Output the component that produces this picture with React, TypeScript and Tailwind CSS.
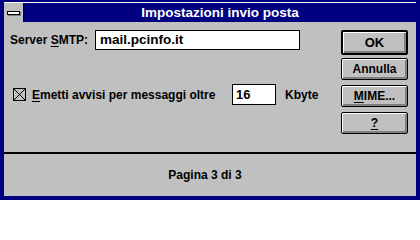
const font = { fontFamily: '"Liberation Sans", Arial, sans-serif' }

const Button = ({ children, isDefault = false, className = '' }: { children: React.ReactNode; isDefault?: boolean; className?: string }) => (
  <div
    className={`flex items-center justify-center bg-[#c0c0c0] rounded-[2px] text-[12px] font-bold text-black ${
      isDefault ? 'border-2 border-black' : 'border border-black'
    } shadow-[inset_1px_1px_0_#ffffff,inset_-2px_-2px_0_#808080] ${className}`}
  >
    {children}
  </div>
)

const CheckBox = () => (
  <svg width="13" height="13" viewBox="0 0 13 13" className="shrink-0">
    <rect x="0.5" y="0.5" width="12" height="12" fill="#c0c0c0" stroke="#000" />
    <path d="M1 1 L12 12 M12 1 L1 12" stroke="#000" strokeWidth="1" />
  </svg>
)

export default function App() {
  return (
    <div style={font} className="w-[420px] h-[200px] bg-[#000080] flex flex-col pl-[4px] pr-[4px] pb-[4px] pt-[2px] select-none">
      {/* Title bar */}
      <div className="flex h-[20px] border-t border-white">
        <div className="w-[20px] h-[19px] bg-[#c0c0c0] border-r border-black flex items-center justify-center">
          <div className="w-[13px] h-[4px] bg-white border border-black shadow-[1px_1px_0_#808080]" />
        </div>
        <div className="flex-1 flex items-center justify-center text-white font-bold text-[13.5px] leading-none">
          Impostazioni invio posta
        </div>
      </div>

      {/* Body */}
      <div className="flex-1 bg-[#c0c0c0] flex flex-col">
        <div className="h-[130px] flex">
          {/* Left fields */}
          <div className="flex-1 pt-[8px] pl-[6px]">
            <div className="flex items-center h-[20px] text-[12px] font-bold text-black">
              <span className="w-[85px]">
                Server <span className="underline underline-offset-2">S</span>MTP:
              </span>
              <div className="w-[205px] h-[20px] bg-white border border-black flex items-center pl-[4px] text-[13.5px]">
                mail.pcinfo.it
              </div>
            </div>

            <div className="flex items-center h-[21px] mt-[34px] text-[12px] font-bold text-black">
              <div className="w-[222px] flex items-center pl-[3px] gap-[6px]">
                <CheckBox />
                <span>
                  <span className="underline underline-offset-2">E</span>metti avvisi per messaggi oltre
                </span>
              </div>
              <div className="w-[44px] h-[21px] bg-white border border-black flex items-center pl-[3px] text-[13px]">
                16
              </div>
              <span className="ml-[9px]">Kbyte</span>
            </div>
          </div>

          {/* Buttons */}
          <div className="w-[67px] mr-[8px] pt-[8px] flex flex-col">
            <Button isDefault className="h-[25px] text-[13px]">OK</Button>
            <Button className="h-[22px] mt-[3px]">Annulla</Button>
            <Button className="h-[22px] mt-[5px]">
              <span>
                <span className="underline underline-offset-2">M</span>IME...
              </span>
            </Button>
            <Button className="h-[22px] mt-[5px]">
              <span className="underline underline-offset-2">?</span>
            </Button>
          </div>
        </div>

        <div className="h-[2px] bg-black" />

        <div className="flex-1 flex items-center justify-center pr-[10px] text-[12px] font-bold text-black">
          Pagina 3 di 3
        </div>
      </div>
    </div>
  )
}
